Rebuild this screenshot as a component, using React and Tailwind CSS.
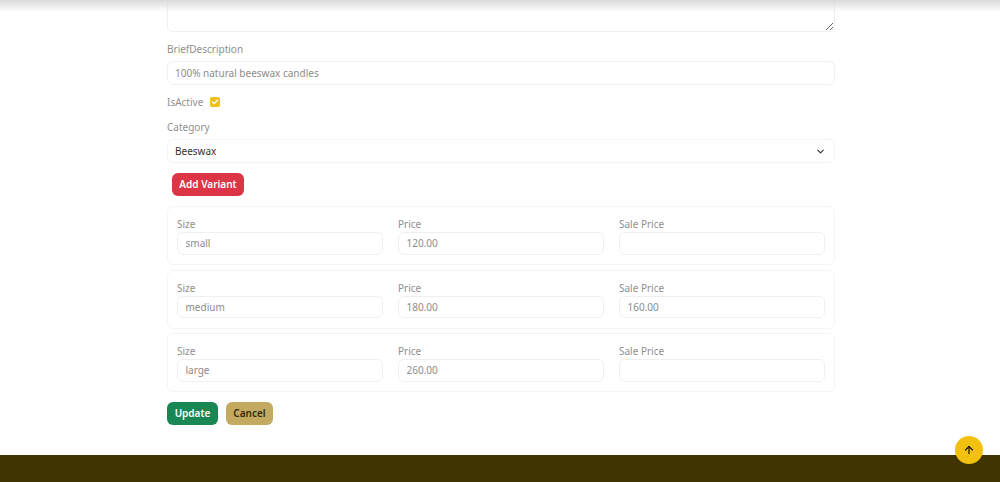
import React from 'react';
import { ArrowUp, ChevronDown, Check } from 'lucide-react';

const variants = [
  { size: 'small', price: '120.00', sale: '' },
  { size: 'medium', price: '180.00', sale: '160.00' },
  { size: 'large', price: '260.00', sale: '' },
];

const Field = ({ label, value }) => (
  <div className="flex-1 min-w-0">
    <label className="block text-[10px] leading-[14px] text-[#8f8f8f]">{label}</label>
    <input
      readOnly
      value={value}
      className="block w-full h-[22.5px] px-[7.5px] mt-px text-[10px] text-[#8c8c8c] bg-white border border-[#efefef] rounded-[6px] outline-none"
    />
  </div>
);

const App = () => {
  return (
    <div className="relative h-[482px] w-[1000px] overflow-hidden bg-white font-['Noto_Sans',sans-serif]">
      {/* top bar shadow */}
      <div className="absolute top-0 left-0 right-0 h-[12px] bg-gradient-to-b from-[#dadada] to-transparent z-10"></div>

      <div className="ml-[167px] w-[668px]">
        <textarea
          readOnly
          className="block w-full h-[62px] -mt-[30px] bg-white border border-[#efefef] rounded-[6px] outline-none"
        ></textarea>

        <label className="block mt-[10px] text-[10px] leading-[14px] text-[#8f8f8f]">BriefDescription</label>
        <input
          readOnly
          value="100% natural beeswax candles"
          className="block w-full h-[24px] mt-[5px] px-[7px] text-[10px] text-[#8c8c8c] bg-white border border-[#efefef] rounded-[6px] outline-none"
        />

        <div className="flex items-center gap-[7px] mt-[10px] h-[14px]">
          <span className="text-[10px] leading-[14px] text-[#8f8f8f]">IsActive</span>
          <span className="flex items-center justify-center w-[10px] h-[10px] rounded-[2px] bg-[#f2c00f]">
            <Check className="w-[8px] h-[8px] text-white" strokeWidth={4} />
          </span>
        </div>

        <label className="block mt-[11px] text-[10px] leading-[14px] text-[#8f8f8f]">Category</label>
        <div className="flex items-center justify-between h-[24px] mt-[5px] pl-[7px] pr-[8px] bg-white border border-[#f5f5f5] rounded-[6px] text-[10px] text-[#333333]">
          <span>Beeswax</span>
          <ChevronDown className="w-[11px] h-[11px] text-[#333333]" strokeWidth={2.5} />
        </div>

        <button className="block ml-[5px] mt-[10px] h-[23px] w-[72px] rounded-[6px] bg-[#dc3545] text-[10px] font-semibold text-white">
          Add Variant
        </button>

        <div className="mt-[10px] flex flex-col gap-[4.5px]">
          {variants.map((v) => (
            <div key={v.size} className="flex gap-[15px] h-[59px] px-[9px] pt-[10px] border border-[#f5f5f5] rounded-[6px]">
              <Field label="Size" value={v.size} />
              <Field label="Price" value={v.price} />
              <Field label="Sale Price" value={v.sale} />
            </div>
          ))}
        </div>

        <div className="flex gap-[8px] mt-[10px]">
          <button className="h-[23px] w-[51px] rounded-[6px] bg-[#198754] text-[10px] font-semibold text-white">Update</button>
          <button className="h-[23px] w-[47px] rounded-[6px] bg-[#c4aa60] text-[10px] font-semibold text-[#33290a]">Cancel</button>
        </div>
      </div>

      {/* footer */}
      <div className="absolute left-0 right-0 bottom-0 h-[27px] bg-[#403403]"></div>

      {/* back to top */}
      <button className="absolute left-[955px] top-[436px] flex items-center justify-center w-[28px] h-[28px] rounded-full bg-[#f2c00f]">
        <ArrowUp className="w-[12px] h-[12px] text-[#1f1a00]" strokeWidth={2.5} />
      </button>
    </div>
  );
};

export default App;
